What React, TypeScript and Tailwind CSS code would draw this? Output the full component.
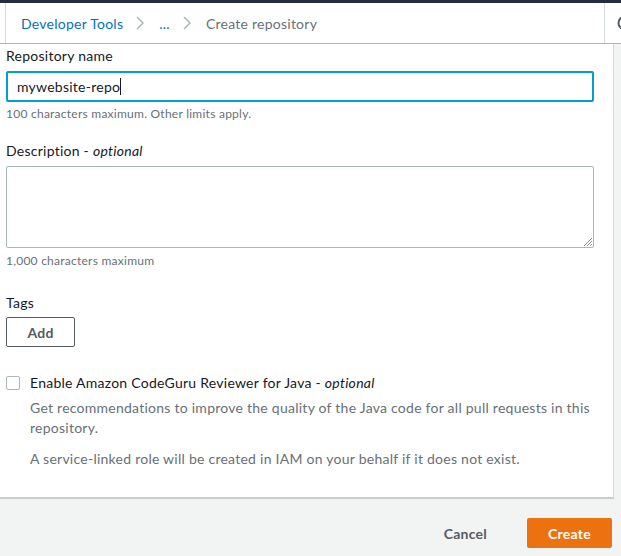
import React from 'react';

const Chevron = () => (
    <svg width="8" height="16" viewBox="0 0 8 16" fill="none" className="ml-[13px] mr-[15px]">
        <path d="M1 2l6 6-6 6" stroke="#aab7b8" strokeWidth="1.5" />
    </svg>
);

const App = () => {
    return (
        <main className="w-[621px] h-[556px] bg-[#f2f3f3] overflow-hidden flex flex-col font-['Lato',sans-serif] tracking-[0.25px] text-[#16191f]">
            <div className="h-[3px] bg-[#232f3e]" />

            {/* Breadcrumbs */}
            <div className="h-[41px] bg-white border-b border-[#aab7b8] flex pl-[5px]">
                <nav className="w-[600px] shrink-0 border-x border-[#d5dbdb] flex items-center pl-[15px] text-[14px]">
                    <span className="text-[#0073bb]">Developer Tools</span>
                    <Chevron />
                    <span className="text-[#0073bb]">...</span>
                    <Chevron />
                    <span className="text-[#687078]">Create repository</span>
                </nav>
                <div className="flex items-center pl-[12px] shrink-0">
                    <svg width="16" height="16" viewBox="0 0 16 16" fill="none">
                        <circle cx="8" cy="8" r="6.5" stroke="#545b64" strokeWidth="2" />
                    </svg>
                </div>
            </div>

            {/* Form card */}
            <section className="w-[614px] bg-white border-r border-[#d5dbdb] border-b-2 border-b-[#c6cdcd] px-[6px] pt-[2px] pb-[28px] text-[14px]">
                <label className="block leading-[20px]">Repository name</label>
                <div className="mt-[5px] h-[31px] w-[588px] border-2 border-[#00a1c9] rounded-[2px] flex items-center pl-[9px]">
                    <span>mywebsite-repo</span>
                    <span className="w-px h-[17px] bg-[#16191f]" />
                </div>
                <p className="mt-[4px] text-[12px] leading-[16px] text-[#687078]">100 characters maximum. Other limits apply.</p>

                <label className="block mt-[19px] leading-[20px]">Description - <i>optional</i></label>
                <div className="mt-[5px] relative h-[82px] w-[588px] border border-[#aab7b8] rounded-[2px]">
                    <svg width="8" height="8" viewBox="0 0 8 8" className="absolute right-[1px] bottom-[1px]">
                        <path d="M8 0L0 8M8 3L3 8M8 6L6 8" stroke="#879596" strokeWidth="1" />
                    </svg>
                </div>
                <p className="mt-[5px] text-[12px] leading-[16px] text-[#687078]">1,000 characters maximum</p>

                <label className="block mt-[24px] leading-[20px]">Tags</label>
                <button className="mt-[4px] w-[69px] h-[30px] border border-[#545b64] rounded-[2px] font-bold text-[#545b64]">Add</button>

                <div className="mt-[26px] flex gap-[10px]">
                    <div className="mt-[3px] w-[14px] h-[14px] border border-[#aab7b8] rounded-[2px] shrink-0" />
                    <div className="leading-[20px]">
                        <div>Enable Amazon CodeGuru Reviewer for Java - <i>optional</i></div>
                        <p className="mt-[5px] w-[570px] text-[#687078]">
                            Get recommendations to improve the quality of the Java code for all pull requests in this repository.
                        </p>
                        <p className="mt-[11px] text-[#687078]">A service-linked role will be created in IAM on your behalf if it does not exist.</p>
                    </div>
                </div>
            </section>

            {/* Footer actions */}
            <div className="flex justify-end items-center gap-[40px] pt-[19px] pr-[9px]">
                <button className="font-bold text-[14px] text-[#545b64]">Cancel</button>
                <button className="w-[85px] h-[30px] bg-[#ec7211] rounded-[2px] font-bold text-[14px] text-white">Create</button>
            </div>
        </main>
    );
};

export default App;
